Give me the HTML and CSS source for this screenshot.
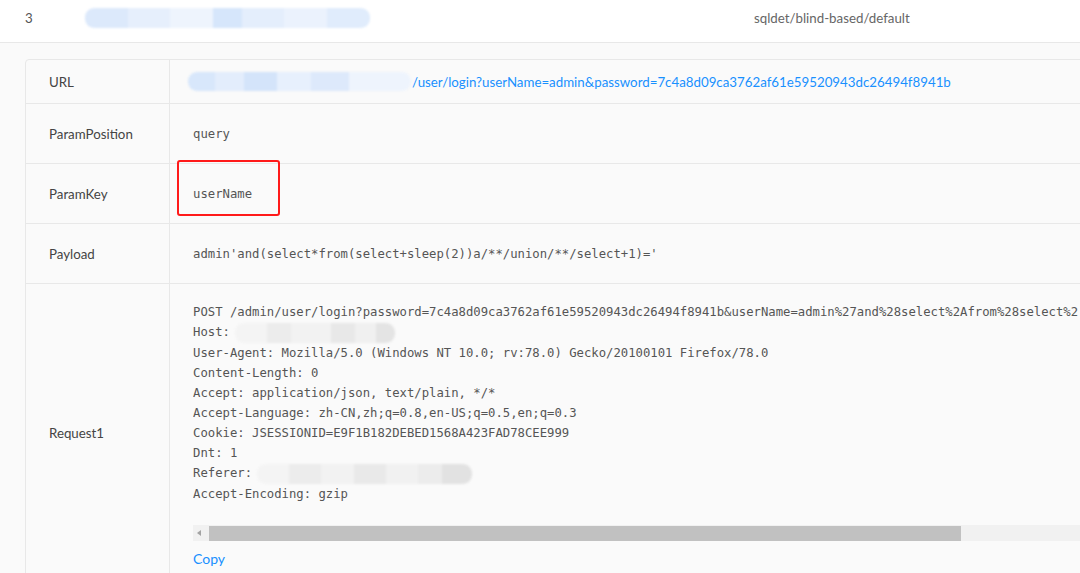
FILE: index.html
```html
<!DOCTYPE html>
<html>
<head>
<meta charset="utf-8">
<link rel="stylesheet" href="styles.css">
</head>
<body>
<div class="header">
  <span class="idx">3</span>
  <span class="blob blob-head"></span>
  <span class="plugin">sqldet/blind-based/default</span>
</div>
<div class="panel">
  <div class="table">
    <div class="label row-url">URL</div>
    <div class="value row-url"><span class="blob blob-url"></span><a class="link">/user/login?userName=admin&amp;password=7c4a8d09ca3762af61e59520943dc26494f8941b</a></div>

    <div class="label row-std">ParamPosition</div>
    <div class="value row-std"><code class="mono">query</code></div>

    <div class="label row-std">ParamKey</div>
    <div class="value row-std marked"><code class="mono">userName</code><span class="redbox"></span></div>

    <div class="label row-std">Payload</div>
    <div class="value row-std"><code class="mono">admin'and(select*from(select+sleep(2))a/**/union/**/select+1)='</code></div>

    <div class="label row-req">Request1</div>
    <div class="value row-req req">
<pre class="mono pre">POST /admin/user/login?password=7c4a8d09ca3762af61e59520943dc26494f8941b&amp;userName=admin%27and%28select%2Afrom%28select%2
Host: <span class="blob blob-host"></span>
User-Agent: Mozilla/5.0 (Windows NT 10.0; rv:78.0) Gecko/20100101 Firefox/78.0
Content-Length: 0
Accept: application/json, text/plain, */*
Accept-Language: zh-CN,zh;q=0.8,en-US;q=0.5,en;q=0.3
Cookie: JSESSIONID=E9F1B182DEBED1568A423FAD78CEE999
Dnt: 1
Referer: <span class="blob blob-ref"></span>
Accept-Encoding: gzip</pre>
      <div class="hscroll">
        <div class="arrow"><span class="tri"></span></div>
        <div class="thumb"></div>
        <div class="rest"></div>
      </div>
      <a class="copy">Copy</a>
    </div>
  </div>
</div>
</body>
</html>
```

FILE: styles.css
```css
html, body {
  margin: 0;
  padding: 0;
  overflow: hidden;
  background: #fafafa;
}
body {
  font-family: "Lato", "Open Sans", sans-serif;
  font-size: 13.3px;
  color: #444;
  width: 1160px;
}
.header {
  display: grid;
  grid-template-columns: 60px 669px auto;
  align-items: start;
  box-sizing: border-box;
  padding: 7px 0 0 25px;
  line-height: 22px;
  background: #fff;
  border-bottom: 1px solid #e8e8e8;
  height: 43px;
}
.idx { color: #555; }
.plugin { color: #666; }
.blob {
  display: inline-block;
  vertical-align: middle;
  border-radius: 9px;
  filter: blur(1.2px);
}
.blob-head {
  width: 285px;
  height: 20px;
  margin-top: 1px;
  background: linear-gradient(90deg, #dce9fb 0 15%, #e6effc 15% 30%, #eef4fd 30% 45%, #d6e6fb 45% 55%, #e4eefc 55% 70%, #ebf2fd 70% 85%, #e0ecfc 85% 100%);
}
.panel {
  padding: 16px 0 0 25px;
}
.table {
  display: grid;
  grid-template-columns: 144px 1fr;
  border: 1px solid #e8e8e8;
  border-radius: 4px 0 0 0;
  background: #fafafa;
}
.label, .value {
  box-sizing: border-box;
  border-bottom: 1px solid #e8e8e8;
  display: flex;
  align-items: center;
}
.label {
  border-right: 1px solid #e8e8e8;
  padding-left: 23px;
  color: #444;
}
.value {
  padding-left: 23px;
  position: relative;
}
.row-url { height: 44px; }
.row-std { height: 60px; }
.row-req {
  height: 298px;
}
.req {
  flex-direction: column;
  align-items: stretch;
  padding-top: 18px;
  overflow: hidden;
}
.link {
  color: #1890ff;
  margin-left: 1px;
}
.blob-url {
  width: 223px;
  height: 19px;
  margin-left: -5px;
  background: linear-gradient(90deg, #d8e7fb 0 12%, #e3edfc 12% 25%, #d4e4fa 25% 40%, #e7f0fd 40% 55%, #dde9fb 55% 72%, #eef4fd 72% 100%);
}
.mono {
  font-family: "DejaVu Sans Mono", "Liberation Mono", monospace;
  font-size: 12.25px;
  color: #555;
}
.pre {
  margin: 0;
  line-height: 20.1px;
  white-space: pre;
  overflow: hidden;
}
.blob-host {
  width: 160px;
  height: 20px;
  margin-left: -2px;
  background: linear-gradient(90deg, #f4f4f4 0 20%, #ececec 20% 35%, #f2f2f2 35% 60%, #e8e8e8 60% 75%, #f0f0f0 75% 88%, #e4e4e4 88% 100%);
}
.blob-ref {
  width: 215px;
  height: 20px;
  margin-left: -2px;
  background: linear-gradient(90deg, #f4f4f4 0 15%, #ececec 15% 30%, #f2f2f2 30% 45%, #e9e9e9 45% 60%, #f1f1f1 60% 75%, #ececec 75% 86%, #e2e2e2 86% 100%);
}
.hscroll {
  display: flex;
  height: 16px;
  margin-top: 21px;
  background: #f1f1f1;
}
.arrow {
  width: 16px;
  display: flex;
  align-items: center;
  justify-content: center;
}
.tri {
  width: 0;
  height: 0;
  border-top: 3.5px solid transparent;
  border-bottom: 3.5px solid transparent;
  border-right: 4px solid #a3a3a3;
  margin-left: -4px;
}
.thumb {
  width: 752px;
  height: 15px;
  background: #c1c1c1;
  margin-top: 1px;
}
.rest { flex: 1; }
.copy {
  color: #1890ff;
  font-size: 14px;
  line-height: 22px;
  margin-top: 7px;
}
.redbox {
  position: absolute;
  left: 7px;
  top: -4px;
  width: 103px;
  height: 56px;
  box-sizing: border-box;
  border: 2px solid #ff1a1a;
  border-radius: 3px;
}
```
